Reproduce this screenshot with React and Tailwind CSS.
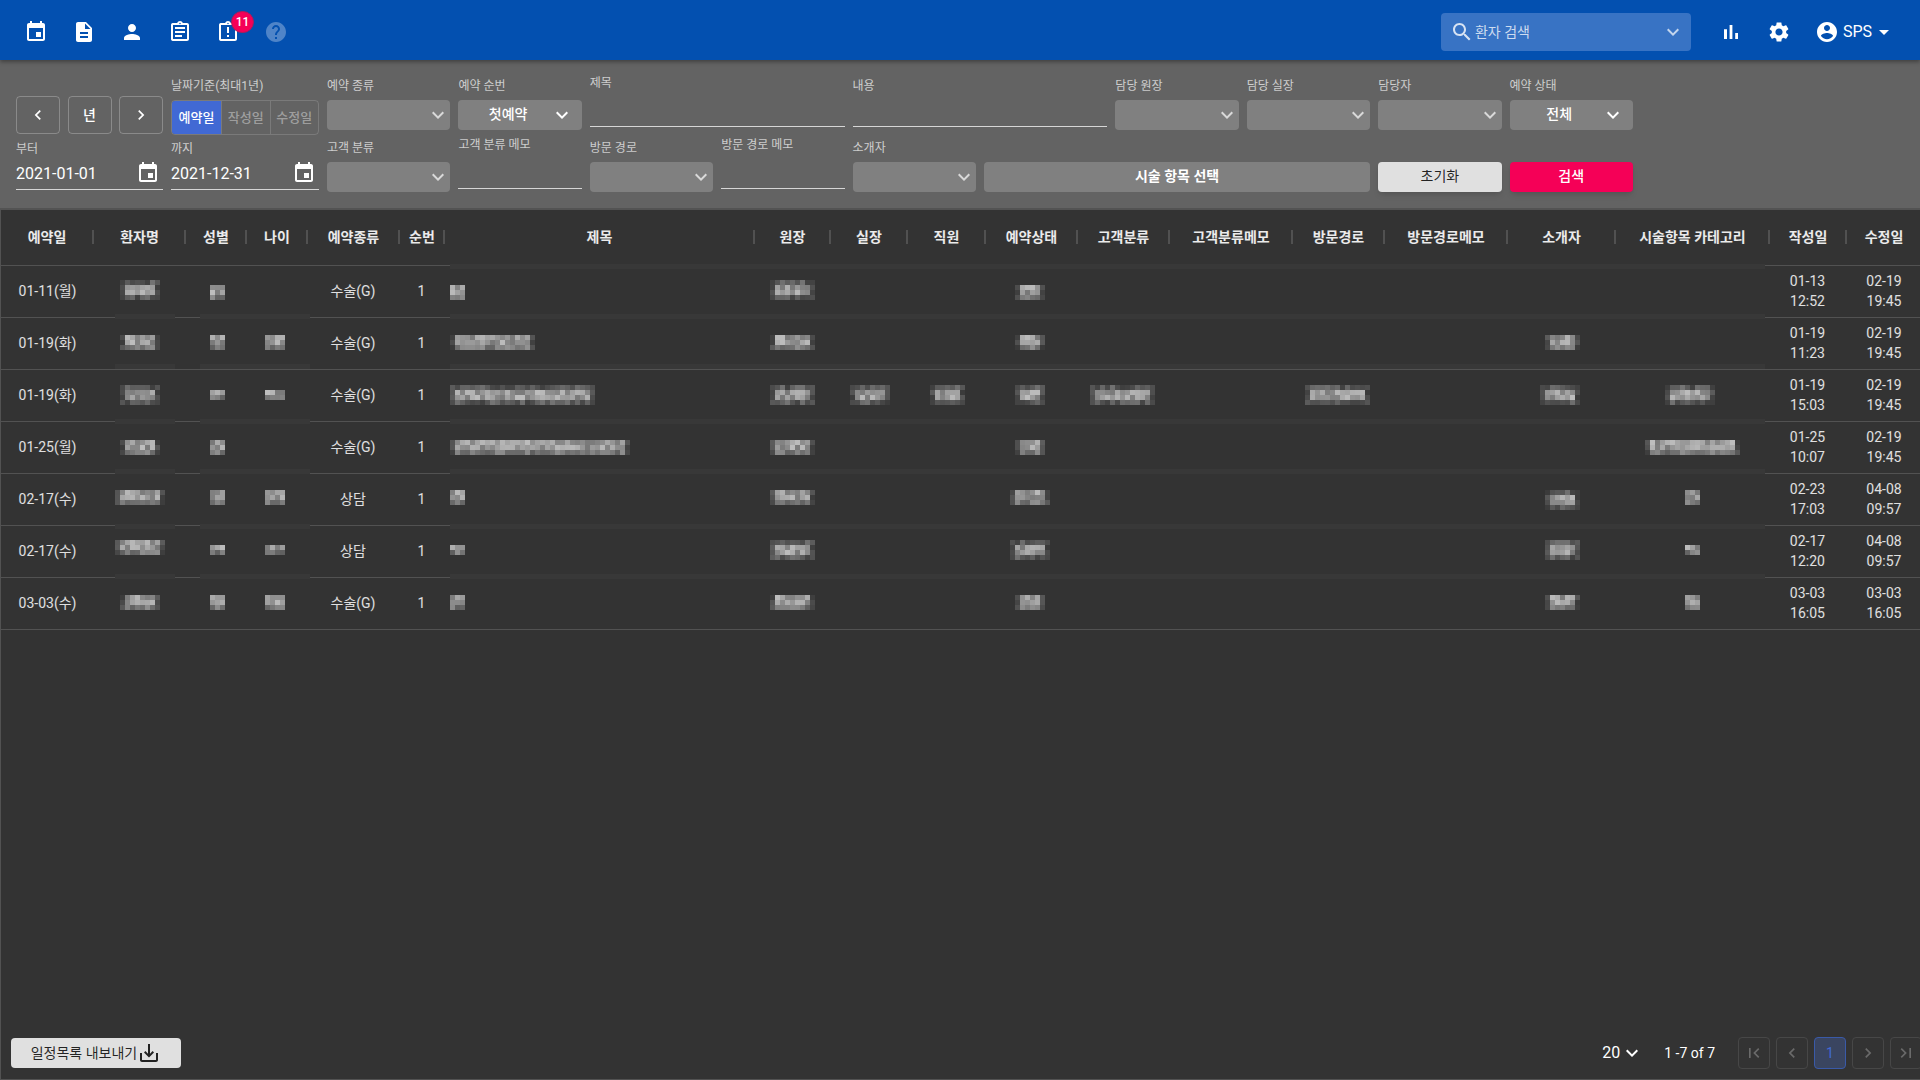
const FONT = "font-['Roboto','Noto_Sans_CJK_KR',sans-serif]"

const icons = {
  event: 'M17 12h-5v5h5v-5zM16 1v2H8V1H6v2H5c-1.11 0-1.99.9-1.99 2L3 19c0 1.1.89 2 2 2h14c1.1 0 2-.9 2-2V5c0-1.1-.9-2-2-2h-1V1h-2zm3 18H5V8h14v11z',
  description: 'M14 2H6c-1.1 0-1.99.9-1.99 2L4 20c0 1.1.89 2 1.99 2H18c1.1 0 2-.9 2-2V8l-6-6zm2 16H8v-2h8v2zm0-4H8v-2h8v2zm-3-5V3.5L18.5 9H13z',
  person: 'M12 12c2.21 0 4-1.79 4-4s-1.79-4-4-4-4 1.79-4 4 1.79 4 4 4zm0 2c-2.67 0-8 1.34-8 4v2h16v-2c0-2.66-5.33-4-8-4z',
  assignment: 'M7 15h7v2H7zm0-4h10v2H7zm0-4h10v2H7zm12-4h-4.18C14.4 1.84 13.3 1 12 1c-1.3 0-2.4.84-2.82 2H5c-.14 0-.27.01-.4.04-.39.08-.74.28-1.01.55-.18.18-.33.4-.43.64-.1.23-.16.49-.16.77v14c0 .27.06.54.16.78s.25.45.43.64c.27.27.62.47 1.01.55.13.02.26.03.4.03h14c1.1 0 2-.9 2-2V5c0-1.1-.9-2-2-2zm-7-.25c.41 0 .75.34.75.75s-.34.75-.75.75-.75-.34-.75-.75.34-.75.75-.75zM19 19H5V5h14v14z',
  assignmentLate: 'M11 15h2v2h-2zm0-8h2v6h-2zm8-4h-4.18C14.4 1.84 13.3 1 12 1c-1.3 0-2.4.84-2.82 2H5c-.14 0-.27.01-.4.04-.39.08-.74.28-1.01.55-.18.18-.33.4-.43.64-.1.23-.16.49-.16.77v14c0 .27.06.54.16.78s.25.45.43.64c.27.27.62.47 1.01.55.13.02.26.03.4.03h14c1.1 0 2-.9 2-2V5c0-1.1-.9-2-2-2zm-7-.25c.41 0 .75.34.75.75s-.34.75-.75.75-.75-.34-.75-.75.34-.75.75-.75zM19 19H5V5h14v14z',
  help: 'M12 2C6.48 2 2 6.48 2 12s4.48 10 10 10 10-4.48 10-10S17.52 2 12 2zm1 17h-2v-2h2v2zm2.07-7.75l-.9.92C13.45 12.9 13 13.5 13 15h-2v-.5c0-1.1.45-2.1 1.17-2.83l1.24-1.26c.37-.36.59-.86.59-1.41 0-1.1-.9-2-2-2s-2 .9-2 2H8c0-2.21 1.79-4 4-4s4 1.79 4 4c0 .88-.36 1.68-.93 2.25z',
  bars: 'M5 9.2h3V19H5zM10.6 5h2.8v14h-2.8zm5.6 8H19v6h-2.8z',
  settings: 'M19.14 12.94c.04-.3.06-.61.06-.94 0-.32-.02-.64-.07-.94l2.03-1.58c.18-.14.23-.41.12-.61l-1.92-3.32c-.12-.22-.37-.29-.59-.22l-2.39.96c-.5-.38-1.03-.7-1.62-.94l-.36-2.54c-.04-.24-.24-.41-.48-.41h-3.84c-.24 0-.43.17-.47.41l-.36 2.54c-.59.24-1.13.57-1.62.94l-2.39-.96c-.22-.08-.47 0-.59.22L2.74 8.87c-.12.21-.08.47.12.61l2.03 1.58c-.05.3-.09.63-.09.94s.02.64.07.94l-2.03 1.58c-.18.14-.23.41-.12.61l1.92 3.32c.12.22.37.29.59.22l2.39-.96c.5.38 1.03.7 1.62.94l.36 2.54c.05.24.24.41.48.41h3.84c.24 0 .44-.17.47-.41l.36-2.54c.59-.24 1.13-.56 1.62-.94l2.39.96c.22.08.47 0 .59-.22l1.92-3.32c.12-.22.07-.47-.12-.61l-2.01-1.58zM12 15.6c-1.98 0-3.6-1.62-3.6-3.6s1.62-3.6 3.6-3.6 3.6 1.62 3.6 3.6-1.62 3.6-3.6 3.6z',
  account: 'M12 2C6.48 2 2 6.48 2 12s4.48 10 10 10 10-4.48 10-10S17.52 2 12 2zm0 3c1.66 0 3 1.34 3 3s-1.34 3-3 3-3-1.34-3-3 1.34-3 3-3zm0 14.2c-2.5 0-4.71-1.28-6-3.22.03-1.99 4-3.08 6-3.08 1.99 0 5.97 1.09 6 3.08-1.29 1.94-3.5 3.22-6 3.22z',
  caret: 'M7 10l5 5 5-5z',
  expand: 'M16.59 8.59L12 13.17 7.41 8.59 6 10l6 6 6-6z',
  left: 'M15.41 7.41L14 6l-6 6 6 6 1.41-1.41L10.83 12z',
  right: 'M10 6L8.59 7.41 13.17 12l-4.58 4.59L10 18l6-6z',
  first: 'M18.41 16.59L13.82 12l4.59-4.59L17 6l-6 6 6 6zM6 6h2v12H6z',
  last: 'M5.59 7.41L10.18 12l-4.59 4.59L7 18l6-6-6-6zM16 6h2v12h-2z',
  search: 'M15.5 14h-.79l-.28-.27C15.41 12.59 16 11.11 16 9.5 16 5.91 13.09 3 9.5 3S3 5.91 3 9.5 5.91 16 9.5 16c1.61 0 3.09-.59 4.23-1.57l.27.28v.79l5 4.99L20.49 19l-4.99-5zm-6 0C7.01 14 5 11.99 5 9.5S7.01 5 9.5 5 14 7.01 14 9.5 11.99 14 9.5 14z',
  saveAlt: 'M19 12v7H5v-7H3v7c0 1.1.9 2 2 2h14c1.1 0 2-.9 2-2v-7h-2zm-6 .67l2.59-2.58L17 11.5l-5 5-5-5 1.41-1.41L11 12.67V3h2z',
}

function Icon({ name, className = 'h-6 w-6' }) {
  return (
    <svg viewBox="0 0 24 24" fill="currentColor" className={`shrink-0 ${className}`}>
      <path d={icons[name]} />
    </svg>
  )
}

const columns = [
  { title: '예약일', w: 93, cls: 'w-[93px]' },
  { title: '환자명', w: 92, cls: 'w-[92px]' },
  { title: '성별', w: 61, cls: 'w-[61px]' },
  { title: '나이', w: 61, cls: 'w-[61px]' },
  { title: '예약종류', w: 92, cls: 'w-[92px]' },
  { title: '순번', w: 45, cls: 'w-[45px]' },
  { title: '제목', w: 310, cls: 'w-[310px]' },
  { title: '원장', w: 76, cls: 'w-[76px]' },
  { title: '실장', w: 77, cls: 'w-[77px]' },
  { title: '직원', w: 78, cls: 'w-[78px]' },
  { title: '예약상태', w: 92, cls: 'w-[92px]' },
  { title: '고객분류', w: 92, cls: 'w-[92px]' },
  { title: '고객분류메모', w: 123, cls: 'w-[123px]' },
  { title: '방문경로', w: 92, cls: 'w-[92px]' },
  { title: '방문경로메모', w: 123, cls: 'w-[123px]' },
  { title: '소개자', w: 108, cls: 'w-[108px]' },
  { title: '시술항목 카테고리', w: 154, cls: 'w-[154px]' },
  { title: '작성일', w: 77, cls: 'w-[77px]' },
  { title: '수정일', w: 74, cls: 'w-[74px]' },
]

const colLeft = (index) => columns.slice(0, index).reduce((sum, col) => sum + col.w, 0)

// blobs: [column, x, y, width, height] in page pixels, snapped to the 5px mosaic
const rows = [
  {
    top: 266, band: '-bottom-[2px]', date: '01-11(월)', type: '수술(G)', created: ['01-13', '12:52'], updated: ['02-19', '19:45'],
    blobs: [[1, 120, 280, 40, 20], [2, 210, 285, 15, 15], [6, 450, 285, 15, 15], [7, 770, 280, 45, 20], [10, 1015, 285, 30, 15]],
  },
  {
    top: 318, band: 'bottom-0', date: '01-19(화)', type: '수술(G)', created: ['01-19', '11:23'], updated: ['02-19', '19:45'],
    blobs: [[1, 120, 335, 40, 15], [2, 210, 335, 15, 15], [3, 265, 335, 20, 15], [6, 450, 335, 85, 15], [7, 770, 335, 45, 15], [10, 1015, 335, 30, 15], [15, 1545, 335, 35, 15]],
  },
  {
    top: 370, band: '-bottom-[3px]', date: '01-19(화)', type: '수술(G)', created: ['01-19', '15:03'], updated: ['02-19', '19:45'],
    blobs: [[1, 120, 385, 40, 20], [2, 210, 390, 15, 10], [3, 265, 390, 20, 10], [6, 450, 385, 145, 20], [7, 770, 385, 45, 20], [8, 850, 385, 40, 20], [9, 930, 385, 35, 20], [10, 1015, 385, 30, 20], [11, 1090, 385, 65, 20], [13, 1305, 385, 65, 20], [15, 1540, 385, 40, 20], [16, 1665, 385, 50, 20]],
  },
  {
    top: 422, band: '-bottom-px', date: '01-25(월)', type: '수술(G)', created: ['01-25', '10:07'], updated: ['02-19', '19:45'],
    blobs: [[1, 120, 440, 40, 15], [2, 210, 440, 15, 15], [6, 450, 440, 180, 15], [7, 770, 440, 45, 15], [10, 1015, 440, 30, 15], [16, 1645, 440, 95, 15]],
  },
  {
    top: 474, band: '-bottom-[4px]', date: '02-17(수)', type: '상담', created: ['02-23', '17:03'], updated: ['04-08', '09:57'],
    blobs: [[1, 115, 490, 50, 15], [2, 210, 490, 15, 15], [3, 265, 490, 20, 15], [6, 450, 490, 15, 15], [7, 770, 490, 45, 15], [10, 1010, 490, 40, 15], [15, 1545, 490, 35, 20], [16, 1685, 490, 15, 15]],
  },
  {
    top: 526, band: '-bottom-[2px]', date: '02-17(수)', type: '상담', created: ['02-17', '12:20'], updated: ['04-08', '09:57'],
    blobs: [[1, 115, 540, 50, 15], [2, 210, 545, 15, 10], [3, 265, 545, 20, 10], [6, 450, 545, 15, 10], [7, 770, 540, 45, 20], [10, 1010, 540, 40, 20], [15, 1545, 540, 35, 20], [16, 1685, 545, 15, 10]],
  },
  {
    top: 578, band: null, date: '03-03(수)', type: '수술(G)', created: ['03-03', '16:05'], updated: ['03-03', '16:05'],
    blobs: [[1, 120, 595, 40, 15], [2, 210, 595, 15, 15], [3, 265, 595, 20, 15], [6, 450, 595, 15, 15], [7, 770, 595, 45, 15], [10, 1015, 595, 30, 15], [15, 1545, 595, 35, 15], [16, 1685, 595, 15, 15]],
  },
]

function Mosaic({ x, y, w, h, marginLeft, marginTop }) {
  const cells = []
  for (let cy = 0; cy < h; cy += 5) {
    for (let cx = 0; cx < w; cx += 5) {
      const noise = Math.abs(Math.sin((x + cx) * 12.9898 + (y + cy) * 78.233) * 43758.5453) % 1
      const edgeRow = h >= 20 && (cy === 0 || cy === h - 5)
      const edgeCol = w >= 30 && (cx === 0 || cx === w - 5)
      let gray = 120 + noise * 70
      if (edgeCol) gray = 58 + noise * 35
      else if (edgeRow) gray = 62 + noise * 55
      else if (cy === h - 5) gray = 95 + noise * 50
      const value = Math.round(gray)
      cells.push(<rect key={`${cx}-${cy}`} x={cx} y={cy} width="5" height="5" fill={`rgb(${value},${value},${value})`} />)
    }
  }
  return (
    <svg width={w} height={h} shapeRendering="crispEdges" className="shrink-0" style={{ marginLeft, marginTop }}>
      {cells}
    </svg>
  )
}

function Band({ className }) {
  return <div className={`absolute h-[5px] bg-[#383838] ${className}`} />
}

function Label({ children, className = '' }) {
  return <div className={`h-4 whitespace-nowrap pt-px text-xs leading-4 text-white/70 ${className}`}>{children}</div>
}

function SelectField({ label, value }) {
  return (
    <div>
      <Label>{label}</Label>
      <div className="mt-[7px] flex h-[30px] items-center rounded bg-[#808080]">
        <span className="flex-1 pb-0.5 text-center text-sm font-medium text-white">{value}</span>
        <Icon name="expand" className={value ? '-ml-[8px] mr-[8px] h-6 w-6 text-white' : 'h-6 w-6 text-white/70'} />
      </div>
    </div>
  )
}

function TextField({ label, labelClass, lineClass }) {
  return (
    <div>
      <Label className={labelClass}>{label}</Label>
      <div className={`border-b border-[#d6d6d6] ${lineClass}`} />
    </div>
  )
}

function DateField({ label, value }) {
  return (
    <div>
      <Label className="mt-px">{label}</Label>
      <div className="flex h-[34px] items-center justify-between border-b border-[#d6d6d6] pr-[3px] text-white">
        <span className="pt-0.5 text-base">{value}</span>
        <Icon name="event" />
      </div>
    </div>
  )
}

function NavButton({ children }) {
  return (
    <div className="flex h-[38px] w-[44px] items-center justify-center rounded border border-white/25 text-white">
      {children}
    </div>
  )
}

function PageButton({ children, active }) {
  return (
    <div
      className={`flex h-8 w-8 shrink-0 items-center justify-center rounded border text-sm ${
        active ? 'border-[#3a5aa8] bg-[#3a4560] text-[#4169d4]' : 'border-[#474747] text-[#6a6a6a]'
      }`}
    >
      {children}
    </div>
  )
}

function FilterPanel() {
  return (
    <section className="h-[150px] shrink-0 border-b-2 border-[#535353] bg-[#636363] pt-[17px] pl-4">
      <div className="grid auto-rows-[62px] grid-cols-[147px_148px_repeat(10,123.4px)] gap-x-2">
        <div className="flex justify-between pt-[19px]">
          <NavButton><Icon name="left" className="h-5 w-5" /></NavButton>
          <NavButton><span className="text-sm font-medium">년</span></NavButton>
          <NavButton><Icon name="right" className="h-5 w-5" /></NavButton>
        </div>
        <div>
          <Label>날짜기준(최대1년)</Label>
          <div className="mt-[7px] flex h-[35px] overflow-hidden rounded border border-white/15 text-[13px] font-medium">
            <span className="flex w-[49px] items-center justify-center bg-[#4169d4] text-white">예약일</span>
            <span className="flex flex-1 items-center justify-center border-l border-white/15 text-white/40">작성일</span>
            <span className="flex flex-1 items-center justify-center border-l border-white/15 text-white/40">수정일</span>
          </div>
        </div>
        <SelectField label="예약 종류" />
        <SelectField label="예약 순번" value="첫예약" />
        <div className="col-span-2">
          <TextField label="제목" labelClass="-mt-[3px]" lineClass="h-[37px]" />
        </div>
        <div className="col-span-2">
          <TextField label="내용" lineClass="h-[34px]" />
        </div>
        <SelectField label="담당 원장" />
        <SelectField label="담당 실장" />
        <SelectField label="담당자" />
        <SelectField label="예약 상태" value="전체" />

        <DateField label="부터" value="2021-01-01" />
        <DateField label="까지" value="2021-12-31" />
        <SelectField label="고객 분류" />
        <TextField label="고객 분류 메모" labelClass="-mt-[3px]" lineClass="h-[37px]" />
        <SelectField label="방문 경로" />
        <TextField label="방문 경로 메모" labelClass="-mt-[3px]" lineClass="h-[37px]" />
        <SelectField label="소개자" />
        <div className="col-span-3 pt-[23px]">
          <div className="flex h-[30px] items-center justify-center rounded bg-[#808080] pb-0.5 text-sm font-bold text-white">
            시술 항목 선택
          </div>
        </div>
        <div className="pt-[23px]">
          <div className="flex h-[30px] items-center justify-center rounded bg-[#e0e0e0] pb-0.5 text-sm text-black/85 shadow-md">
            초기화
          </div>
        </div>
        <div className="pt-[23px]">
          <div className="flex h-[30px] items-center justify-center rounded bg-[#f50057] pb-0.5 text-sm font-medium text-white shadow-md">
            검색
          </div>
        </div>
      </div>
    </section>
  )
}

function TwoLine({ lines }) {
  return (
    <div className="text-center text-sm leading-5">
      <div>{lines[0]}</div>
      <div>{lines[1]}</div>
    </div>
  )
}

function TableRow({ row }) {
  const textByColumn = {
    0: row.date,
    4: row.type,
    5: '1',
    17: <TwoLine lines={row.created} />,
    18: <TwoLine lines={row.updated} />,
  }

  return (
    <div className="relative flex h-[52px] border-b border-[#525252] text-sm text-white/85">
      {columns.map((col, index) => {
        const blob = row.blobs.find((item) => item[0] === index)
        const left = colLeft(index)

        return (
          <div
            key={col.title}
            className={`flex shrink-0 ${col.cls} ${textByColumn[index] ? 'items-center justify-center pb-0.5' : 'items-start'} ${index === 0 || index === 18 ? 'pl-0.5' : ''}`}
          >
            {textByColumn[index]}
            {blob && (
              <Mosaic
                x={blob[1]}
                y={blob[2]}
                w={blob[3]}
                h={blob[4]}
                marginLeft={blob[1] - left}
                marginTop={blob[2] - row.top}
              />
            )}
          </div>
        )
      })}
      {row.band && (
        <>
          <Band className={`left-[115px] w-[60px] ${row.band}`} />
          <Band className={`left-[200px] w-[110px] ${row.band}`} />
          <Band className={`left-[450px] w-[1315px] ${row.band}`} />
        </>
      )}
    </div>
  )
}

export default function App() {
  return (
    <div className={`flex h-screen w-[1920px] flex-col overflow-hidden bg-[#333333] ${FONT}`}>
      <header className="relative z-10 flex h-[60px] shrink-0 items-center bg-[#0350b0] pl-3 pr-6 pt-1 text-white shadow-[0_2px_4px_rgba(0,0,0,0.35)]">
        {['event', 'description', 'person', 'assignment'].map((name) => (
          <div key={name} className="flex h-12 w-12 items-center justify-center">
            <Icon name={name} />
          </div>
        ))}
        <div className="relative flex h-12 w-12 items-center justify-center">
          <Icon name="assignmentLate" />
          <span className="absolute left-[27px] top-[3px] flex h-[22px] w-[23px] items-center justify-center rounded-full border border-[#a81c5c] bg-[#f50057] text-xs font-medium text-white">
            11
          </span>
        </div>
        <div className="flex h-12 w-12 items-center justify-center text-white/30">
          <Icon name="help" />
        </div>

        <div className="ml-auto flex h-[38px] w-[250px] items-center rounded bg-[#3873c4] pl-[9px] pr-[6px]">
          <Icon name="search" className="h-6 w-6 text-white/80" />
          <span className="ml-px flex-1 text-sm text-white/75">환자 검색</span>
          <Icon name="expand" className="h-6 w-6 text-white/70" />
        </div>
        <div className="ml-[16px] flex h-12 w-12 items-center justify-center">
          <Icon name="bars" />
        </div>
        <div className="flex h-12 w-12 items-center justify-center">
          <Icon name="settings" />
        </div>
        <div className="ml-[12px] flex items-center">
          <Icon name="account" />
          <span className="ml-1 text-base">SPS</span>
          <Icon name="caret" />
        </div>
      </header>

      <FilterPanel />

      <main className="flex min-h-0 flex-1 flex-col shadow-[inset_1px_-1px_0_#525252]">
        <div className="relative flex h-14 shrink-0 border-b border-[#525252] pb-0.5 text-sm font-bold text-white/90">
          {columns.map((col, index) => (
            <div key={col.title} className={`flex shrink-0 items-center ${col.cls}`}>
              <span className="flex-1 pl-0.5 text-center whitespace-nowrap">{col.title}</span>
              {index < columns.length - 1 && <span className="-mr-px h-[14px] w-[2px] shrink-0 bg-white/15" />}
            </div>
          ))}
          <Band className="left-[450px] w-[1315px] -bottom-[4px]" />
        </div>

        {rows.map((row) => (
          <TableRow key={row.top} row={row} />
        ))}

        <footer className="mt-auto flex h-[54px] shrink-0 items-center justify-between pl-[11px]">
          <div className="flex h-[30px] w-[170px] items-center justify-center rounded bg-[#e0e0e0] text-sm text-black/85">
            일정목록 내보내기
            <Icon name="saveAlt" />
          </div>
          <div className="-mr-[2px] flex items-center text-white">
            <span className="text-base">20</span>
            <Icon name="expand" />
            <span className="ml-[20px] mr-[23px] text-sm">1 -7 of 7</span>
            <div className="flex gap-[6px]">
              <PageButton><Icon name="first" className="h-5 w-5" /></PageButton>
              <PageButton><Icon name="left" className="h-5 w-5" /></PageButton>
              <PageButton active>1</PageButton>
              <PageButton><Icon name="right" className="h-5 w-5" /></PageButton>
              <PageButton><Icon name="last" className="h-5 w-5" /></PageButton>
            </div>
          </div>
        </footer>
      </main>
    </div>
  )
}
